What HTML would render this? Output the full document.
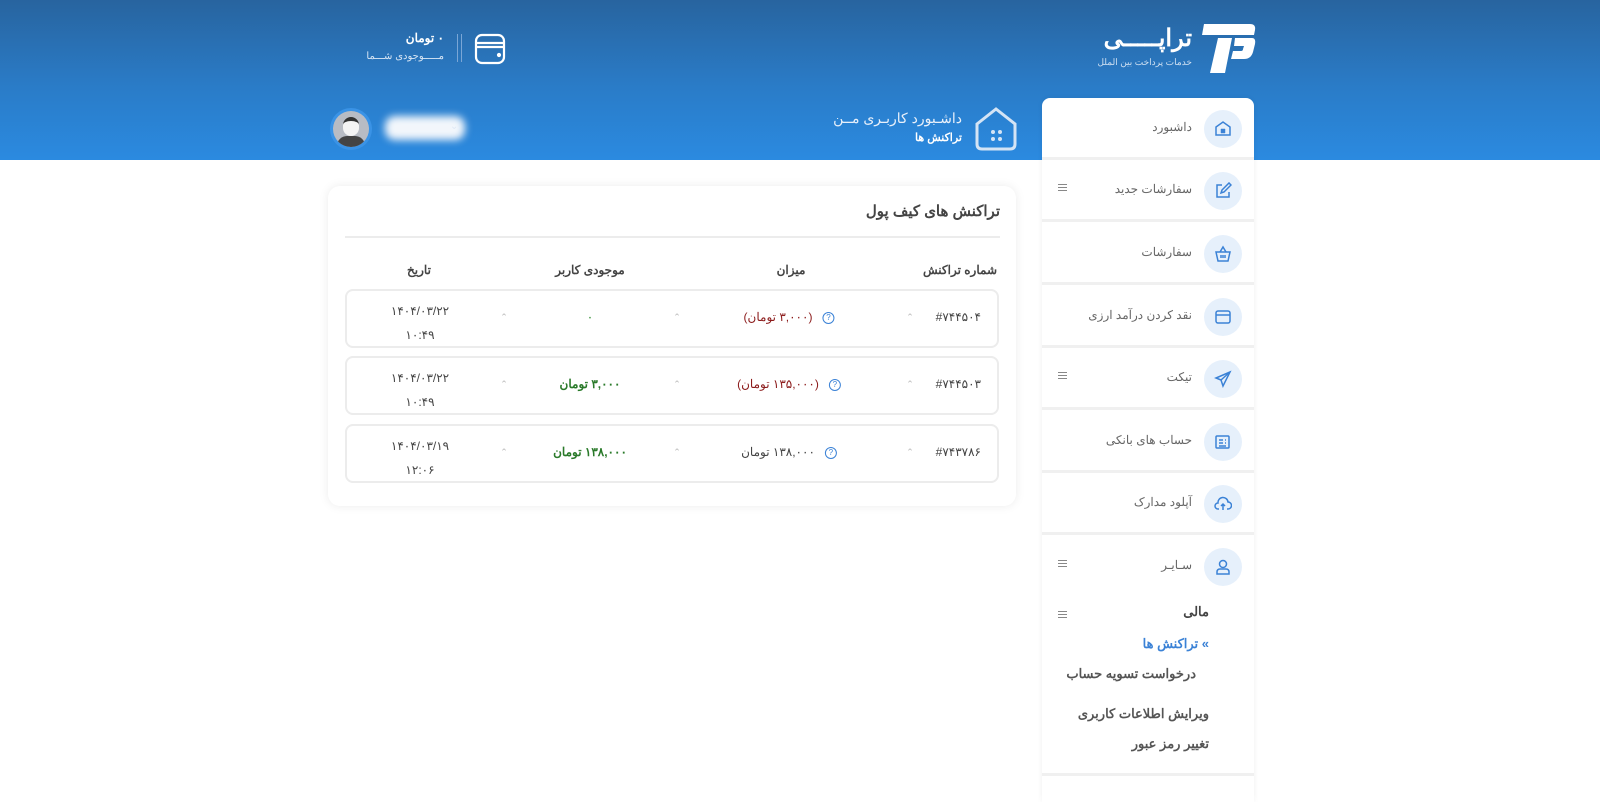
<!DOCTYPE html>
<html dir="rtl"><head><meta charset="utf-8">
<style>
*{box-sizing:border-box;margin:0;padding:0}
body{width:1600px;height:802px;overflow:hidden;background:#fff;font-family:"Liberation Sans","Noto Sans CJK SC",sans-serif;position:relative}
.hdr{position:absolute;left:0;top:0;width:1600px;height:160px;background:linear-gradient(180deg,#28649f 0%,#2a7cc8 55%,#2b8ae0 100%)}
.abs{position:absolute}
.side{position:absolute;left:1042px;top:98px;width:212px;height:704px;background:#fff;border-radius:8px 8px 0 0;box-shadow:0 0 6px rgba(0,0,0,.06)}
.item{position:absolute;left:0;width:212px;height:62px;border-bottom:3px solid #f0f0f0}
.circ{position:absolute;right:12px;top:12px;width:38px;height:38px;border-radius:50%;background:#e6f0fb;display:flex;align-items:center;justify-content:center}
.lbl{position:absolute;right:62px;top:22px;font-size:12px;color:#666}
.ham{position:absolute;left:16px;top:24px;width:9px;height:7px;border-top:1px solid #888;border-bottom:1px solid #888}
.ham:after{content:"";position:absolute;left:0;top:2px;width:9px;border-top:1px solid #888}
.card{position:absolute;left:328px;top:186px;width:688px;height:320px;background:#fff;border-radius:12px;box-shadow:0 0 10px rgba(0,0,0,.08)}
.row{position:absolute;left:17px;width:654px;height:59px;border:2px solid #ececec;border-radius:8px;font-size:12px}
.c{position:absolute;transform:translateX(50%);white-space:nowrap;text-align:center}
.chev{color:#bbb;font-size:9px}
.q{display:inline-block;width:12px;height:12px;border:1.5px solid #3b82d6;border-radius:50%;color:#3b82d6;font-size:8px;line-height:9px;text-align:center;margin-left:10px;vertical-align:middle}
</style></head><body>
<div class="hdr"></div>
<!-- logo -->
<svg class="abs" style="left:1198px;top:22px" width="58" height="52" viewBox="0 0 58 52" fill="#fff"><path d="M6 2H52Q58 2 57 8L56 13H4Z"/><path d="M20 16H34L27 51H12Z"/><path d="M37 16H54Q58 16 57 22L55 30Q53 37 46 37H33L35 29H43Q45 29 45 27L46 24H36Z"/></svg>
<div class="abs" style="right:408px;top:24px;color:#fff;font-size:24px;font-weight:bold">تراپـــــی</div>
<div class="abs" style="right:408px;top:57px;color:#cfe0f2;font-size:9px">خدمات پرداخت بین الملل</div>
<!-- wallet -->
<svg class="abs" style="left:474px;top:33px" width="32" height="32" viewBox="0 0 32 32" fill="none" stroke="#fff" stroke-width="2.2"><rect x="2" y="2" width="28" height="28" rx="6"/><path d="M2 10H30M2 14H30"/><circle cx="25" cy="22" r="1" fill="#fff"/></svg>
<div class="abs" style="left:457px;top:34px;width:5px;height:28px;border-left:1px solid #7aa6d6;border-right:1px solid #7aa6d6"></div>
<div class="abs" style="right:1156px;top:31px;color:#fff;font-size:12px;font-weight:bold">۰ تومان</div>
<div class="abs" style="right:1156px;top:51px;color:#d8e6f5;font-size:10px">مـــــوجودی شـــما</div>
<!-- breadcrumb -->
<svg class="abs" style="left:973px;top:106px" width="46" height="46" viewBox="0 0 46 46" fill="none" stroke="#d4e4f5" stroke-width="3"><path d="M4 18L23 3L42 18V38Q42 43 37 43H9Q4 43 4 38Z"/><g fill="#d4e4f5" stroke="none"><circle cx="20" cy="26" r="2"/><circle cx="27" cy="26" r="2"/><circle cx="20" cy="33" r="2"/><circle cx="27" cy="33" r="2"/></g></svg>
<div class="abs" style="right:638px;top:110px;color:#e8f0fa;font-size:14px">داشـبورد کاربـری مــن</div>
<div class="abs" style="right:638px;top:131px;color:#fff;font-size:11px;font-weight:bold">تراکنش ها</div>
<!-- user -->
<div class="abs" style="left:330px;top:108px;width:42px;height:42px;border-radius:50%;background:#3a93e6;padding:3px"><div style="width:36px;height:36px;border-radius:50%;background:#b8bcc4;overflow:hidden;position:relative"><div style="position:absolute;left:10px;top:6px;width:16px;height:19px;border-radius:8px;background:#f4f4f4;border-top:4px solid #333"></div><div style="position:absolute;left:4px;top:25px;width:28px;height:14px;border-radius:10px 10px 0 0;background:#444"></div></div></div>
<div class="abs" style="left:385px;top:116px;width:80px;height:24px;border-radius:10px;background:#f2f6fb;filter:blur(4px)"></div>
<div class="abs" style="left:450px;top:121px;color:#dfe9f5;font-size:10px">⌄</div>
<!-- sidebar -->
<div class="side">
<div class="item" style="top:0"><div class="circ"><svg width="18" height="18" viewBox="0 0 18 18" fill="none" stroke="#3b82d6" stroke-width="1.5"><path d="M2 7L9 2L16 7V15H2Z"/><circle cx="8" cy="10" r=".6" fill="#3b82d6"/><circle cx="10" cy="10" r=".6" fill="#3b82d6"/><circle cx="8" cy="12" r=".6" fill="#3b82d6"/><circle cx="10" cy="12" r=".6" fill="#3b82d6"/></svg></div><div class="lbl">داشبورد</div></div>
<div class="item" style="top:62px"><div class="circ"><svg width="18" height="18" viewBox="0 0 18 18" fill="none" stroke="#3b82d6" stroke-width="1.5"><path d="M8 3H3V15H15V10"/><path d="M7 11L8 8L15 1L17 3L10 10Z"/></svg></div><div class="lbl">سفارشات جدید</div><div class="ham"></div></div>
<div class="item" style="top:125px"><div class="circ"><svg width="18" height="18" viewBox="0 0 18 18" fill="none" stroke="#3b82d6" stroke-width="1.5"><path d="M2 7H16L14 16H4Z"/><path d="M6 7L9 2L12 7M7 10V13M9 10V13M11 10V13"/></svg></div><div class="lbl">سفارشات</div></div>
<div class="item" style="top:188px"><div class="circ"><svg width="18" height="18" viewBox="0 0 18 18" fill="none" stroke="#3b82d6" stroke-width="1.5"><rect x="2" y="3" width="14" height="12" rx="2"/><path d="M2 7H16"/></svg></div><div class="lbl">نقد کردن درآمد ارزی</div></div>
<div class="item" style="top:250px"><div class="circ"><svg width="18" height="18" viewBox="0 0 18 18" fill="none" stroke="#3b82d6" stroke-width="1.5"><path d="M16 2L2 8L7 10L9 16Z"/><path d="M7 10L16 2"/></svg></div><div class="lbl">تیکت</div><div class="ham"></div></div>
<div class="item" style="top:313px"><div class="circ"><svg width="18" height="18" viewBox="0 0 18 18" fill="none" stroke="#3b82d6" stroke-width="1.5"><rect x="2" y="3" width="13" height="12" rx="1"/><path d="M5 7H9M5 10H9M11 7H12M11 10H12M5 13H12"/></svg></div><div class="lbl">حساب های بانکی</div></div>
<div class="item" style="top:375px"><div class="circ"><svg width="18" height="18" viewBox="0 0 18 18" fill="none" stroke="#3b82d6" stroke-width="1.5"><path d="M5 14H4A3 3 0 0 1 4 8A5 5 0 0 1 14 7A3.5 3.5 0 0 1 14 14H13"/><path d="M9 15V9M7 11L9 9L11 11"/></svg></div><div class="lbl">آپلود مدارک</div></div>
<div class="item" style="top:438px;height:240px"><div class="circ"><svg width="18" height="18" viewBox="0 0 18 18" fill="none" stroke="#3b82d6" stroke-width="1.5"><circle cx="9" cy="6" r="3.5"/><path d="M3 16V14Q3 11 6 11H12Q15 11 15 14V16Z"/></svg></div><div class="lbl">سـایـر</div><div class="ham"></div>
<div class="abs" style="right:45px;top:68px;font-size:13px;font-weight:bold;color:#444">مالی</div><div class="ham" style="top:75px"></div>
<div class="abs" style="right:45px;top:100px;font-size:13px;font-weight:bold;color:#3b82d6">» تراکنش ها</div>
<div class="abs" style="right:58px;top:130px;font-size:13px;font-weight:bold;color:#555">درخواست تسویه حساب</div>
<div class="abs" style="right:45px;top:170px;font-size:13px;font-weight:bold;color:#555">ویرایش اطلاعات کاربری</div>
<div class="abs" style="right:45px;top:200px;font-size:13px;font-weight:bold;color:#555">تغییر رمز عبور</div>
</div>
</div>
<!-- card -->
<div class="card">
<div class="abs" style="right:16px;top:16px;font-size:15px;font-weight:bold;color:#444">تراکنش های کیف پول</div>
<div class="abs" style="left:17px;top:50px;width:655px;height:2px;background:#ececec"></div>
<div class="abs" style="font-size:12px;font-weight:bold;color:#444;top:77px;width:688px">
<span class="c" style="right:56px">شماره تراکنش</span><span class="c" style="right:225px">میزان</span><span class="c" style="right:426px">موجودی کاربر</span><span class="c" style="right:597px">تاریخ</span></div>
<div class="row" style="top:103px"><span class="c" style="right:16px;top:19px;transform:none;color:#444">#۷۴۴۵۰۴</span><span class="c chev" style="right:87px;top:21px">⌃</span><span class="c" style="right:208px;top:19px;color:#8b1a1a"><span class="q">?</span>(۳,۰۰۰ تومان)</span><span class="c chev" style="right:320px;top:21px">⌃</span><span class="c" style="right:407px;top:19px;color:#2a8a2a">۰</span><span class="c chev" style="right:493px;top:21px">⌃</span><span class="c" style="right:577px;top:8px;line-height:24px;color:#444">۱۴۰۴/۰۳/۲۲<br>۱۰:۴۹</span></div>
<div class="row" style="top:170px"><span class="c" style="right:16px;top:19px;transform:none;color:#444">#۷۴۴۵۰۳</span><span class="c chev" style="right:87px;top:21px">⌃</span><span class="c" style="right:208px;top:19px;color:#8b1a1a"><span class="q">?</span>(۱۳۵,۰۰۰ تومان)</span><span class="c chev" style="right:320px;top:21px">⌃</span><span class="c" style="right:407px;top:19px;color:#2a7a2a;font-weight:bold">۳,۰۰۰ تومان</span><span class="c chev" style="right:493px;top:21px">⌃</span><span class="c" style="right:577px;top:8px;line-height:24px;color:#444">۱۴۰۴/۰۳/۲۲<br>۱۰:۴۹</span></div>
<div class="row" style="top:238px"><span class="c" style="right:16px;top:19px;transform:none;color:#444">#۷۴۳۷۸۶</span><span class="c chev" style="right:87px;top:21px">⌃</span><span class="c" style="right:208px;top:19px;color:#444"><span class="q">?</span>۱۳۸,۰۰۰ تومان</span><span class="c chev" style="right:320px;top:21px">⌃</span><span class="c" style="right:407px;top:19px;color:#2a7a2a;font-weight:bold">۱۳۸,۰۰۰ تومان</span><span class="c chev" style="right:493px;top:21px">⌃</span><span class="c" style="right:577px;top:8px;line-height:24px;color:#444">۱۴۰۴/۰۳/۱۹<br>۱۲:۰۶</span></div>
</div>
</body></html>
